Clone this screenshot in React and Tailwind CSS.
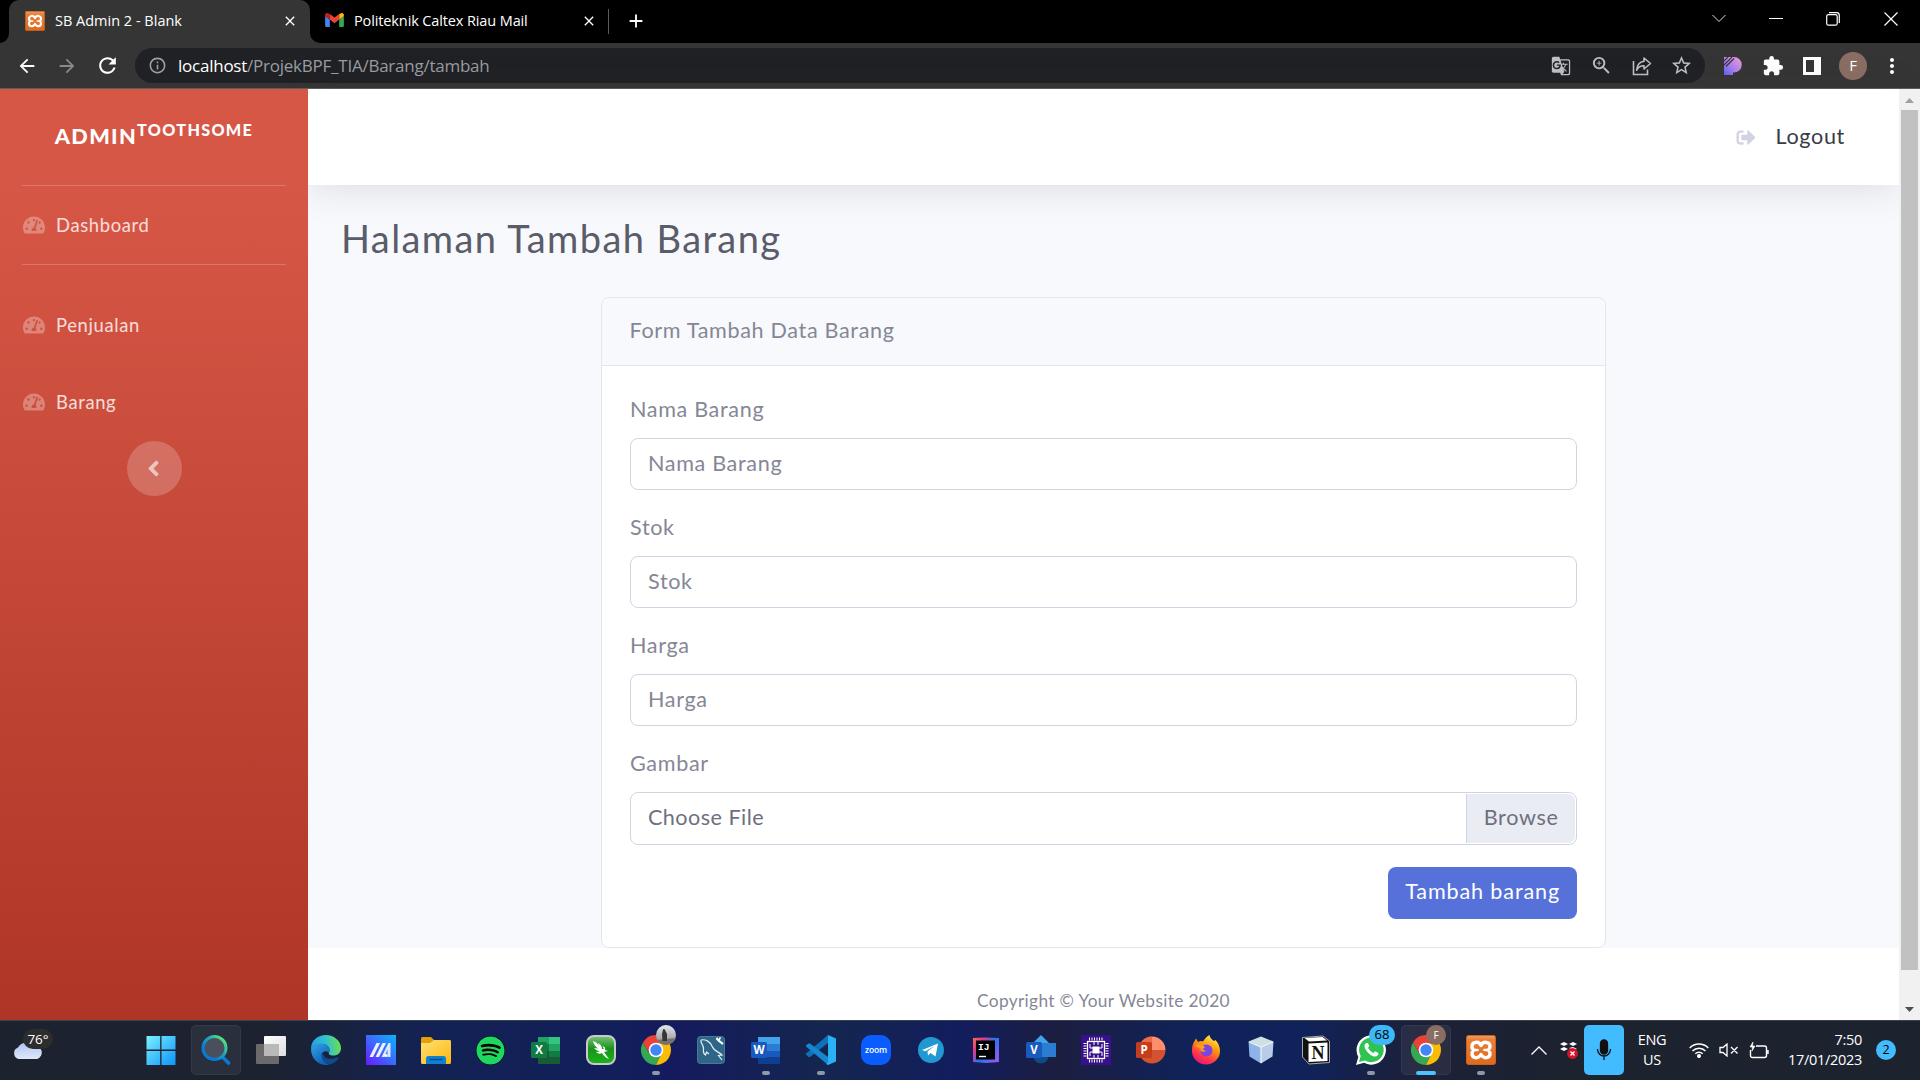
import React from "react";
import { FaTachometerAlt, FaSignOutAlt, FaAngleLeft, FaSpotify } from "react-icons/fa";
import { MdStarBorder, MdExtension, MdGTranslate, MdZoomIn, MdInfoOutline, MdArrowBack, MdArrowForward, MdRefresh, MdMoreVert, MdClose, MdAdd } from "react-icons/md";

const XamppIcon = ({ className }) => (
  <svg viewBox="0 0 30 30" className={className}>
    <defs>
      <linearGradient id="xampp" x1="0" y1="0" x2="0" y2="1">
        <stop offset="0" stopColor="#f0a266" />
        <stop offset="0.14" stopColor="#e9803a" />
        <stop offset="1" stopColor="#e0691c" />
      </linearGradient>
    </defs>
    <rect x="0.5" y="0.5" width="29" height="29" rx="2" fill="url(#xampp)" stroke="#c9601d" />
    <path d="M15 10.500C13.500 7.500 11.500 7 9.500 7.500C5.500 8 5 12.500 7.500 15C5 18 5.500 22 9.500 22.700C12 23 13.500 22 15 19.500C16.500 22 18 23 20.500 22.700C24.500 22 25 18 22.500 15C25 12.500 24.500 8 20.500 7.500C18.500 7 16.500 7.500 15 10.500Z" fill="none" stroke="#fff" strokeWidth="3.400" strokeLinejoin="round" />
    <path d="M8 15H11.500M18.500 15H22" stroke="#fff" strokeWidth="2.600" strokeLinecap="round" />
  </svg>
);

const GmailIcon = () => (
  <svg viewBox="0 0 20 16" className="h-[15px] w-[19px]">
    <path d="M1.5 15H5V7L0 3.4V13.5A1.5 1.5 0 0 0 1.5 15Z" fill="#4285f4" />
    <path d="M15 15H18.5A1.5 1.5 0 0 0 20 13.5V3.4L15 7Z" fill="#34a853" />
    <path d="M15 1V7L20 3.4V2A2 2 0 0 0 16.8 0.4Z" fill="#fbbc04" />
    <path d="M5 7V1L10 4.8L15 1V7L10 10.8Z" fill="#ea4335" />
    <path d="M0 2V3.4L5 7V1L3.2 0.4A2 2 0 0 0 0 2Z" fill="#c5221f" />
  </svg>
);

const ShareIcon = () => (
  <svg viewBox="0 0 20 20" className="h-5 w-5" fill="none" stroke="#bdc1c6" strokeWidth="1.6">
    <path d="M1.5 5V18.5H15.5V13.5" />
    <path d="M12 2L18.5 7.5L12 13V9.8C8.5 9.8 6 11.2 4.7 14.2C5 9.5 7.5 6 12 5.3Z" strokeLinejoin="round" />
  </svg>
);

const PicIcon = () => (
  <svg viewBox="0 0 18 18" className="h-[18px] w-[18px]">
    <defs>
      <linearGradient id="pic" x1="1" y1="0" x2="0" y2="1">
        <stop offset="0" stopColor="#f09fd0" />
        <stop offset="0.5" stopColor="#b583ea" />
        <stop offset="1" stopColor="#5b62f4" />
      </linearGradient>
    </defs>
    <path d="M0 0H10A7 7 0 0 1 10 15.500H9V18H0Z" fill="url(#pic)" />
    <path d="M0 4L4 0M0 8L8 0M2 9.500L10 1.500" stroke="#353535" strokeWidth="1.100" />
  </svg>
);

function TabStrip() {
  return (
    <div className="flex h-[43px] shrink-0 bg-black text-white">
      <svg viewBox="0 0 10 10" className="h-[10px] w-[9px] self-end" preserveAspectRatio="none">
        <path d="M10 0V10H0A10 10 0 0 0 10 0Z" fill="#353535" />
      </svg>
      <div className="flex w-[301px] items-center rounded-t-[10px] bg-[#353535] pb-[2px] pl-[16px] pr-[12px]">
        <XamppIcon className="h-5 w-5" />
        <span className="ml-[10px] flex-1 whitespace-nowrap text-[14.5px]">SB Admin 2 - Blank</span>
        <MdClose className="h-[16px] w-[16px]" />
      </div>
      <svg viewBox="0 0 10 10" className="h-[10px] w-[10px] self-end">
        <path d="M0 0V10H10A10 10 0 0 1 0 0Z" fill="#353535" />
      </svg>
      <div className="flex w-[288px] items-center pb-[2px] pl-[5px] pr-[11px]">
        <GmailIcon />
        <span className="ml-[10px] flex-1 whitespace-nowrap text-[14.500px] tracking-[-0.12px]">Politeknik Caltex Riau Mail</span>
        <MdClose className="h-[16px] w-[16px]" />
      </div>
      <div className="mt-[9px] h-[25px] w-px bg-[#5a5a5a]" />
      <MdAdd className="ml-[16px] mt-[10px] h-[22px] w-[22px]" />
      <div className="ml-auto flex pr-[22px] pt-[12px]">
        <svg viewBox="0 0 14 14" className="mr-[43px] h-[14px] w-[14px]" fill="none" stroke="#ddd">
          <path d="M0.500 3L7 9.500L13.500 3" />
        </svg>
        <svg viewBox="0 0 14 14" className="mr-[43px] h-[14px] w-[14px]" fill="none" stroke="#fff">
          <path d="M0 6.500H14" />
        </svg>
        <svg viewBox="0 0 14 14" className="mr-[44px] h-[14px] w-[14px]" fill="none" stroke="#fff" strokeWidth="1.200">
          <rect x="0.700" y="2.700" width="10.500" height="10.500" rx="1.800" />
          <path d="M3 0.700H10.500A2.800 2.800 0 0 1 13.300 3.500V11" />
        </svg>
        <svg viewBox="0 0 14 14" className="h-[14px] w-[14px]" stroke="#fff" strokeWidth="1.200">
          <path d="M0.500 0.500L13.500 13.500M13.500 0.500L0.500 13.500" />
        </svg>
      </div>
    </div>
  );
}

function Toolbar() {
  return (
    <div className="flex h-[46px] shrink-0 items-center border-b border-[#5e5e5e] bg-[#353535] text-white">
      <MdArrowBack className="ml-[16px] h-[22px] w-[22px]" />
      <MdArrowForward className="ml-[18px] h-[22px] w-[22px] text-[#8a8a8a]" />
      <MdRefresh className="ml-[17px] h-[25px] w-[25px]" />
      <div className="ml-[15px] flex h-[35px] w-[1570px] items-center rounded-full bg-[#202124] pl-[13px] pr-[12px]">
        <MdInfoOutline className="h-[19px] w-[19px] text-[#9aa0a6]" />
        <div className="ml-[11px] whitespace-nowrap text-[17px] tracking-[-0.24px] text-[#9a9da1]">
          <span className="text-white">localhost</span>/ProjekBPF_TIA/Barang/tambah
        </div>
        <div className="ml-auto flex items-center text-[#bdc1c6]">
          <MdGTranslate className="h-[20px] w-[20px]" />
          <MdZoomIn className="ml-[19px] h-[23px] w-[23px]" />
          <div className="ml-[19px]"><ShareIcon /></div>
          <MdStarBorder className="ml-[18px] h-[23px] w-[23px]" />
        </div>
      </div>
      <div className="ml-[19px]"><PicIcon /></div>
      <MdExtension className="ml-[20px] h-[22px] w-[22px]" />
      <div className="ml-[19px] h-[18px] w-[18px] border-[3px] border-r-[7px] border-white" />
      <div className="ml-[18px] flex h-[28px] w-[28px] items-center justify-center rounded-full bg-[#8b6e63] text-[15px]">F</div>
      <MdMoreVert className="ml-[13px] h-[24px] w-[24px]" />
    </div>
  );
}

const NavItem = ({ label }) => (
  <div className="flex h-[77px] items-center pl-[23px] text-[18.400px] tracking-[0.65px] text-white/80">
    <FaTachometerAlt className="mr-[11px] h-[20px] w-[22px] text-white/30" />
    <span className="relative top-px">{label}</span>
  </div>
);

function Sidebar() {
  return (
    <aside className="relative z-10 flex w-[308px] shrink-0 flex-col bg-linear-to-b from-[#d75746] from-10% to-[#af3526]">
      <div className="flex h-[96px] items-center justify-center pb-[2px] text-[21.700px] font-black tracking-[1.300px] text-white">
        <span>ADMIN<sup className="text-[16.200px]">TOOTHSOME</sup></span>
      </div>
      <div className="mx-[22px] h-px bg-white/20" />
      <NavItem label="Dashboard" />
      <div className="mx-[22px] mb-[21.500px] mt-px h-px bg-white/20" />
      <NavItem label="Penjualan" />
      <NavItem label="Barang" />
      <div className="ml-[127px] flex h-[55px] w-[55px] items-center justify-center rounded-full bg-white/20 pr-[3px] text-white/60">
        <FaAngleLeft className="h-[25px] w-[25px]" />
      </div>
    </aside>
  );
}

const Field = ({ label }) => (
  <div className="mb-[21px]">
    <label className="mb-[12px] block">{label}</label>
    <input placeholder={label} className="block h-[52px] w-full rounded-[8px] border border-[#d1d3e2] bg-white px-[17px] pb-[2px] tracking-[0.65px] placeholder:text-[#858796]" />
  </div>
);

function Main() {
  return (
    <main className="flex min-w-0 flex-1 flex-col bg-[#f8f9fc] text-[21.600px] leading-[33px] tracking-[0.65px] text-[#858796]">
      <header className="mb-[30px] flex h-[96px] shrink-0 items-center justify-end bg-white pr-[54px] shadow-[0_3px_38px_rgba(58,59,69,0.15)]">
        <FaSignOutAlt className="mr-[20px] h-[19px] w-[20px] text-[#d1d3e2]" />
        <span className="relative -top-px text-[#3a3b45]">Logout</span>
      </header>
      <h1 className="mb-[36px] ml-[33px] text-[38px] leading-[46px] tracking-[1.400px] text-[#5a5c69]">Halaman Tambah Barang</h1>
      <section className="ml-[293px] w-[1005px] overflow-hidden rounded-[8px] border border-[#e3e6f0] bg-white">
        <div className="border-b border-[#e3e6f0] bg-[#f8f9fc] px-[27.500px] pb-[18px] pt-[16px]">Form Tambah Data Barang</div>
        <div className="px-[28px] pb-[28px] pt-[26.500px]">
          <Field label="Nama Barang" />
          <Field label="Stok" />
          <Field label="Harga" />
          <label className="mb-[12px] block">Gambar</label>
          <div className="flex h-[53px] items-stretch rounded-[8px] border border-[#d1d3e2] bg-white p-px text-[#6e707e]">
            <span className="flex-1 pl-[16px] pt-[7px] tracking-[0.45px]">Choose File</span>
            <span className="rounded-r-[7px] border-l border-[#d1d3e2] bg-[#eaecf4] px-[16.500px] pt-[7px]">Browse</span>
          </div>
          <div className="flex justify-end pt-[22px]">
            <button className="h-[52px] rounded-[8px] bg-[#5671d9] px-[17px] pb-[2px] tracking-[0.85px] text-white">Tambah barang</button>
          </div>
        </div>
      </section>
      <footer className="flex-1 bg-white pt-[36px] text-center text-[17.300px] tracking-[0.35px]">Copyright © Your Website 2020</footer>
    </main>
  );
}

function Scrollbar() {
  return (
    <div className="flex w-[21px] shrink-0 flex-col items-center bg-[#f1f1f1]">
      <svg viewBox="0 0 9 5" className="mt-[9px] h-[5px] w-[9px]"><path d="M0 5L4.500 0L9 5Z" fill="#a0a0a0" /></svg>
      <div className="mt-[7px] h-[860px] w-[17px] bg-[#c1c1c1]" />
      <svg viewBox="0 0 9 5" className="mt-[37px] h-[5px] w-[9px]"><path d="M0 0L4.500 5L9 0Z" fill="#505050" /></svg>
    </div>
  );
}

const svg = "h-[30px] w-[30px]";

const OfficeTile = ({ letter, fill }) => (
  <>
    <rect x="0" y="7" width="16" height="16" rx="1.500" fill={fill} />
    <text x="8" y="19" textAnchor="middle" fontSize="11.500" fontWeight="700" fill="#fff">{letter}</text>
  </>
);

const ChromeMark = () => (
  <>
    <path d="M2 7.500A15 15 0 0 0 15 30L21.500 18.800H8.500Z" fill="#34a853" />
    <path d="M15 8.300H28.400A15 15 0 0 0 2 7.500L8.800 19Z" fill="#ea4335" />
    <path d="M15 8.300H28.400A15 15 0 0 1 15 30L21 18Z" fill="#fbbc04" />
    <circle cx="15" cy="15" r="7.300" fill="#fff" />
    <circle cx="15" cy="15" r="5.700" fill="#4285f4" />
  </>
);

const apps = [
  { name: "start", icon: (
    <svg viewBox="0 0 30 30" className={svg}>
      <defs><linearGradient id="win" x1="0" y1="0" x2="1" y2="1"><stop offset="0" stopColor="#7df0ff" /><stop offset="1" stopColor="#0a94f8" /></linearGradient></defs>
      <path d="M0.500 1H14.200V14.500H0.500ZM15.500 1H29.500V14.500H15.500ZM0.500 16H14.200V30H0.500ZM15.500 16H29.500V30H15.500Z" fill="url(#win)" />
    </svg>) },
  { name: "search", active: true, icon: (
    <svg viewBox="0 0 30 30" className={svg} fill="none">
      <defs><linearGradient id="sea" x1="0.900" y1="0.100" x2="0.300" y2="0.700"><stop offset="0" stopColor="#5ee07a" /><stop offset="0.500" stopColor="#22a8b8" /><stop offset="1" stopColor="#0a7ad8" /></linearGradient></defs>
      <path d="M21 21.500L27.500 28" stroke="#0a7ad8" strokeWidth="3.600" strokeLinecap="round" />
      <circle cx="13.500" cy="13" r="11.500" stroke="url(#sea)" strokeWidth="3" fill="#4a505b" />
    </svg>) },
  { name: "task view", icon: (
    <svg viewBox="0 0 30 30" className={svg}>
      <defs><linearGradient id="tv" x1="0" y1="0" x2="1" y2="1"><stop offset="0" stopColor="#fff" /><stop offset="1" stopColor="#ddd" /></linearGradient></defs>
      <rect x="0" y="9" width="23" height="20" rx="1" fill="#6a6a6a" />
      <rect x="8" y="1" width="22" height="20" rx="1" fill="url(#tv)" />
      <rect x="8" y="9" width="15" height="12" fill="#b9b9b9" />
    </svg>) },
  { name: "edge", icon: (
    <svg viewBox="0 0 30 30" className={svg}>
      <defs>
        <linearGradient id="ed" x1="0" y1="0.500" x2="1" y2="0.400"><stop offset="0" stopColor="#27a0dc" /><stop offset="0.500" stopColor="#2fc0d0" /><stop offset="1" stopColor="#6de04c" /></linearGradient>
        <linearGradient id="ed2" x1="0" y1="0" x2="0.600" y2="1"><stop offset="0" stopColor="#36a5e8" /><stop offset="1" stopColor="#0b5fb4" /></linearGradient>
      </defs>
      <path d="M0 14C0 5 7 0 15 0C23 0 30 6 30 13C30 18 26.500 20.500 22.500 20.500C18.500 20.500 17 19 18 17.500C20 14 17 9 11 9C6 9 1.500 11 0 14Z" fill="url(#ed)" />
      <path d="M0 14C1.500 11 6 8 11 8.500C16 9 19.500 13 18 17C17.500 18.500 16 15 12.500 17C10 19 11 26 18 29.700C8 31.500 0 24 0 14Z" fill="url(#ed2)" />
      <path d="M10.500 18.500C9.500 23 13 28.500 19 29.500C23 28.500 26 26 27.500 23C27.500 22 27 22 26 22.500C19 25.500 12 23.500 11.800 17Z" fill="#114a8f" />
    </svg>) },
  { name: "armoury", icon: (
    <svg viewBox="0 0 30 30" className={svg}>
      <defs><linearGradient id="my" x1="0" y1="1" x2="1" y2="0"><stop offset="0" stopColor="#6a18ff" /><stop offset="0.500" stopColor="#3c6aff" /><stop offset="1" stopColor="#0ab4f8" /></linearGradient></defs>
      <rect width="30" height="30" fill="url(#my)" />
      <path d="M3.500 22H7L14 8H10.500ZM9.500 22H13L20 8H16.500Z" fill="#fff" opacity="0.900" />
      <path d="M15.500 22L22.500 8H24.500V22H21.500V14.500L18.500 22Z" fill="#dfe6ff" />
      <circle cx="20" cy="20.500" r="1.600" fill="#fff" />
    </svg>) },
  { name: "explorer", icon: (
    <svg viewBox="0 0 30 30" className={svg}>
      <defs><linearGradient id="fo" x1="0" y1="0" x2="1" y2="1"><stop offset="0" stopColor="#ffe072" /><stop offset="1" stopColor="#fbb810" /></linearGradient></defs>
      <path d="M0 3.500Q0 2 1.500 2H10L13 5H20V12H0Z" fill="#e3a008" />
      <path d="M0 8H9L13 5H29Q30 5 30 6.500V27.500Q30 29 28.500 29H1.500Q0 29 0 27.500Z" fill="url(#fo)" />
      <path d="M5 29V23.500Q5 21 7.500 21H22.500Q25 21 25 23.500V29Z" fill="#1080d0" />
      <path d="M8.500 24.500H21.500" stroke="#0a4a86" strokeWidth="1.400" />
    </svg>) },
  { name: "spotify", icon: (
    <div className="rounded-full bg-black"><FaSpotify className="h-[29px] w-[29px] text-[#1ed760]" /></div>) },
  { name: "excel", icon: (
    <svg viewBox="0 0 30 30" className={svg}>
      <path d="M7 2H18V9H7Z" fill="#21a366" /><path d="M18 2H29V9H18Z" fill="#33c481" />
      <path d="M7 9H18V16H7Z" fill="#107c41" /><path d="M18 9H29V16H18Z" fill="#21a366" />
      <path d="M7 16H18V29H7Z" fill="#185c37" /><path d="M18 16H29V22H18Z" fill="#107c41" /><path d="M18 22H29V29H18Z" fill="#185c37" />
      <OfficeTile letter="X" fill="#107c41" />
    </svg>) },
  { name: "camtasia", icon: (
    <svg viewBox="0 0 30 30" className={svg}>
      <defs><linearGradient id="cm" x1="0" y1="0" x2="0" y2="1"><stop offset="0" stopColor="#7cc47c" /><stop offset="0.450" stopColor="#1b931b" /><stop offset="1" stopColor="#18b418" /></linearGradient></defs>
      <rect x="1" y="1" width="28" height="28" rx="7" fill="url(#cm)" stroke="#c9c9c9" strokeWidth="2" />
      <path d="M7 6Q11 7 13 11L12 8Q16 10 16 14L18 14L16.500 11Q20 12 19 15L22 16L18 17Q20 20 23 24Q18 22 16 18Q13 20 10 17L14 16.500Q10 16 8 13L12 13.500Q8 11 7 6Z" fill="#fff" />
    </svg>) },
  { name: "chrome", dot: true, badge: (
    <span className="absolute left-[28px] top-[4px] h-[20px] w-[20px] overflow-hidden rounded-full bg-linear-to-b from-[#e6e8ea] via-[#b4bbbf] to-[#8d8d8b]">
      <svg viewBox="0 0 20 20" className="h-full w-full">
        <path d="M0 15L20 13V20H0Z" fill="#77726e" />
        <path d="M7 4.500A1.300 1.300 0 0 1 9 5L11 9V16H6.500L6 9Z" fill="#393536" />
      </svg>
    </span>
  ), icon: (<svg viewBox="0 0 30 30" className={svg}><ChromeMark /></svg>) },
  { name: "workbench", icon: (
    <svg viewBox="0 0 30 30" className={svg} fill="none">
      <rect x="1.500" y="1.500" width="27" height="27" rx="3" fill="#2f6587" stroke="#457c9b" />
      <path d="M5 5C9 4 14 6 16.500 12C18 16 23 17 26 20L22.500 20.500L26 25M5 5C4 8 8 10 7.500 14C7 17 8 19 9.500 20L10.500 17L13 19" stroke="#e2eef3" strokeWidth="1.200" />
      <path d="M20.500 3L22.500 5.500L27 9" stroke="#fff" strokeWidth="2.200" />
      <path d="M22.500 5.500L24.500 2.500" stroke="#fff" strokeWidth="1.500" />
    </svg>) },
  { name: "word", dot: true, icon: (
    <svg viewBox="0 0 30 30" className={svg}>
      <path d="M7 2H29V9H7Z" fill="#41a5ee" /><path d="M7 9H29V16H7Z" fill="#2b7cd3" /><path d="M7 16H29V22H7Z" fill="#185abd" /><path d="M7 22H29V29H7Z" fill="#103f91" />
      <OfficeTile letter="W" fill="#185abd" />
    </svg>) },
  { name: "vscode", dot: true, icon: (
    <svg viewBox="0 0 30 30" className={svg}>
      <path d="M22 0L22 8L4 22L2.500 22L0 19.500V18.500Z" fill="#0f6fb8" />
      <path d="M22 30V22L4 8.500L2.500 8.500L0 10.500V11.500Z" fill="#1587d1" />
      <path d="M22 0L30 3.500V26.500L22 30L20.500 29L22 27Z" fill="#2bb0f5" />
    </svg>) },
  { name: "zoom", icon: (
    <svg viewBox="0 0 30 30" className={svg}>
      <rect width="30" height="30" rx="10" fill="#0b5cff" />
      <text x="15" y="17.500" textAnchor="middle" fontSize="8.500" fontWeight="600" fill="#fff" textLength="22">zoom</text>
    </svg>) },
  { name: "telegram", icon: (
    <svg viewBox="0 0 30 30" className={svg}>
      <circle cx="15" cy="15" r="13" fill="#2298d2" />
      <path d="M6 15L22 8.500L19.500 21.500L14.500 18L12 20.500L11.500 16.500L18.500 11L9.500 16.200Z" fill="#fff" />
    </svg>) },
  { name: "intellij", icon: (
    <svg viewBox="0 0 30 30" className={svg}>
      <defs><linearGradient id="ij" x1="0" y1="0" x2="1" y2="0.700"><stop offset="0" stopColor="#fe6d4a" /><stop offset="0.300" stopColor="#d93a8c" /><stop offset="0.600" stopColor="#2474f0" /><stop offset="1" stopColor="#8a5bf0" /></linearGradient></defs>
      <path d="M2 3L14 2.500L28 3V27L15 28L2 27Z" fill="url(#ij)" />
      <rect x="5" y="5.500" width="19" height="19" fill="#000" />
      <text x="7" y="15" fontSize="9.500" fontWeight="700" fill="#fff" fontFamily="Liberation Mono, monospace">IJ</text>
      <path d="M8 21.500H15" stroke="#fff" strokeWidth="1.400" />
    </svg>) },
  { name: "visio", icon: (
    <svg viewBox="0 0 30 30" className={svg}>
      <circle cx="15" cy="21" r="7.500" fill="#114a8b" />
      <path d="M15 0L23 8L15 16L7 8Z" fill="#41a5ee" />
      <rect x="16" y="8" width="14" height="14" fill="#2b7cd3" />
      <OfficeTile letter="V" fill="#185abd" />
    </svg>) },
  { name: "chip", icon: (
    <svg viewBox="0 0 30 30" className={svg} fill="none" stroke="#fff">
      <rect width="30" height="30" fill="#37118a" stroke="none" />
      <rect x="6.500" y="6.500" width="17" height="17" strokeWidth="1.300" />
      <rect x="12" y="12" width="6" height="6" fill="#fff" />
      <path d="M9 9V13H12M21 9V13H18M9 21V17H12M21 21V17H18M13 7V10M17 7V10M13 23V20M17 23V20" strokeWidth="1" />
      <path d="M8 4H23M8 26H23" strokeWidth="3" strokeDasharray="1 1.500" />
      <path d="M4 8V23M26 8V23" strokeWidth="3" strokeDasharray="1 1.500" />
    </svg>) },
  { name: "powerpoint", icon: (
    <svg viewBox="0 0 30 30" className={svg}>
      <path d="M16 15V1.500A13.500 13.500 0 1 0 29.500 15Z" fill="#d35230" />
      <path d="M16 1.500A13.500 13.500 0 0 0 2.500 15H16Z" fill="#ed6c47" />
      <path d="M16 1.500A13.500 13.500 0 0 1 29.500 15H16Z" fill="#ff8f6b" />
      <OfficeTile letter="P" fill="#c43e1c" />
    </svg>) },
  { name: "firefox", icon: (
    <svg viewBox="0 0 30 30" className={svg}>
      <defs><linearGradient id="ff" x1="0.800" y1="0" x2="0.300" y2="1"><stop offset="0" stopColor="#fff44f" /><stop offset="0.400" stopColor="#ff980e" /><stop offset="0.750" stopColor="#ff3647" /><stop offset="1" stopColor="#e31587" /></linearGradient></defs>
      <path d="M3 7L5 3.500L7 7Q10 5.500 12 6.500Q15 1.500 18.500 0Q19 3.500 23 6L24.500 5Q29 10 29 16A14 13.500 0 0 1 1 16Q1 10 3 7Z" fill="url(#ff)" />
      <circle cx="15.500" cy="15.500" r="6" fill="#7a45e0" />
      <path d="M4 11Q9 8 14 12Q12 15 8.500 14.500Q11 18 15 16" fill="#ffa21a" />
    </svg>) },
  { name: "virtual box", icon: (
    <svg viewBox="0 0 30 30" className={svg}>
      <path d="M15 1.500L27.500 6.500L15 12L2.500 6.500Z" fill="#cfe0e0" />
      <path d="M2.500 6.500L15 12V28.500L3.500 21.500Z" fill="#8db3e8" />
      <path d="M27.500 6.500L15 12V28.500L26.500 21.500Z" fill="#b9cbe6" />
      <path d="M15 12V28M3 7L15 12L27 7" stroke="#eef6fc" strokeWidth="1.200" fill="none" />
    </svg>) },
  { name: "notion", icon: (
    <svg viewBox="0 0 30 30" className={svg}>
      <path d="M1.500 2.500L22 1L28.500 6V27.500L8 29L1.500 22Z" fill="#111" stroke="#aaa" />
      <path d="M3.500 3L21.500 2L26 5.500L8 6.500Z" fill="#fff" />
      <path d="M7.500 8.500L26.500 7.500V26L7.500 27Z" fill="#fff" />
      <text x="17" y="24" textAnchor="middle" fontSize="18" fontWeight="700" fill="#111" fontFamily="Liberation Serif, serif">N</text>
    </svg>) },
  { name: "whatsapp", dot: true, badge: (
    <span className="absolute left-[26px] top-[4px] flex h-[20px] w-[26px] items-center justify-center rounded-full bg-[#3db9f9] text-[13px] text-black">68</span>
  ), icon: (
    <svg viewBox="0 0 30 30" className={svg}>
      <path d="M0 30L2.300 22A14.700 14.700 0 1 1 8 27.800Z" fill="#fff" />
      <path d="M3 27L4.700 21A12.300 12.300 0 1 1 9 25.400Z" fill="#2fc351" />
      <path d="M10.500 8C8 9 8 12 10 15C12.500 19 16 21.500 19 21.500C21.500 21.500 22.800 19.500 22.500 18L19 16.300L17.500 18C15 17 13 15 12 12.800L13.300 11.300L12 8Z" fill="#fff" />
    </svg>) },
  { name: "chrome profile", active: true, current: true, badge: (
    <span className="absolute left-[28px] top-[4px] flex h-[20px] w-[20px] items-center justify-center rounded-full bg-[#8b6e63] text-[10px] text-white">F</span>
  ), icon: (<svg viewBox="0 0 30 30" className={svg}><ChromeMark /></svg>) },
  { name: "xampp", dot: true, icon: (<XamppIcon className={svg} />) },
];

function Taskbar() {
  return (
    <div className="flex h-[60px] shrink-0 items-center border-t border-[#3a4250] bg-[linear-gradient(90deg,#1c222e_0%,#1c2230_14%,#132253_22%,#121f5b_32%,#151a5e_35%,#14264f_43%,#121d5e_50%,#1c1e40_55%,#10225a_62%,#10225a_68%,#1d2038_74%,#1c222e_82%,#1c222e_100%)] pb-px text-white">
      <div className="relative h-full w-[133px]">
        <svg viewBox="0 0 30 18" className="absolute left-[13px] top-[20px] h-[18px] w-[30px]">
          <defs><linearGradient id="cl" x1="0" y1="0" x2="0" y2="1"><stop offset="0" stopColor="#b0c4f0" /><stop offset="1" stopColor="#dfe8f8" /></linearGradient></defs>
          <path d="M6 18A6 6 0 0 1 5 6.500A9 9 0 0 1 20 5A6.600 6.600 0 0 1 24 18Z" fill="url(#cl)" />
        </svg>
        <span className="absolute left-[23px] top-[8px] flex h-[20px] w-[30px] items-center justify-center rounded-full bg-[#2d2d2d] text-[13.500px]">76°</span>
      </div>
      {apps.map((a) => (
        <div key={a.name} className="relative flex h-[58px] w-[55px] items-center justify-center">
          <div className={a.active ? "flex h-[50px] w-[50px] items-center justify-center rounded-[5px] border border-white/5 bg-white/6" : "flex h-[50px] w-[50px] items-center justify-center"}>
            {a.icon}
          </div>
          {a.badge}
          {a.dot && <span className="absolute bottom-[4px] left-[23.500px] h-[4px] w-[8px] rounded-full bg-[#9297a8]" />}
          {a.current && <span className="absolute bottom-[4px] left-[17.500px] h-[4px] w-[20px] rounded-full bg-[#4cc2ff]" />}
        </div>
      ))}
      <svg viewBox="0 0 16 9" className="ml-[23px] h-[9px] w-[16px]" fill="none" stroke="#fff" strokeWidth="1.300"><path d="M0.500 8.500L8 1L15.500 8.500" /></svg>
      <svg viewBox="0 0 18 18" className="ml-[13px] h-[18px] w-[18px]">
        <path d="M0 3L4 1L8 3L4 5ZM9 3L13 1L17 3L13 5ZM0 8L4 6L8 8L4 10ZM9 7L13 6L17 8L13 9Z" fill="#fff" />
        <circle cx="12.500" cy="12.500" r="5.400" fill="#d8122a" />
        <path d="M10.500 10.500L14.500 14.500M14.500 10.500L10.500 14.500" stroke="#fff" strokeWidth="1.300" />
      </svg>
      <div className="ml-[6px] flex h-[50px] w-[40px] items-center justify-center rounded-[5px] bg-[#42bbff]">
        <svg viewBox="0 0 16 22" className="h-[22px] w-[16px]" fill="none" stroke="#111" strokeWidth="1.300">
          <rect x="4.500" y="1" width="7" height="14" rx="3.500" fill="#111" />
          <path d="M1.500 10A6.500 7 0 0 0 14.500 10M8 17V21" />
        </svg>
      </div>
      <div className="ml-[12px] w-[32px] whitespace-nowrap text-center text-[14.500px] leading-[20px] tracking-[-0.3px]">ENG<br />US</div>
      <svg viewBox="0 0 20 16" className="ml-[21px] h-[16px] w-[20px]" fill="none" stroke="#fff" strokeWidth="1.500">
        <path d="M0.700 6A13 13 0 0 1 19.300 6M3.500 9A9 9 0 0 1 16.500 9M6.300 11.700A5.300 5.300 0 0 1 13.700 11.700" />
        <circle cx="10" cy="14" r="1.300" fill="#fff" />
      </svg>
      <svg viewBox="0 0 20 14" className="ml-[10px] h-[14px] w-[20px]" fill="none" stroke="#fff" strokeWidth="1.300">
        <path d="M1 4.500H4L8 1V13L4 9.500H1ZM12 4L18.500 10.500M18.500 4L12 10.500" />
      </svg>
      <svg viewBox="0 0 20 17" className="ml-[10px] h-[17px] w-[20px]" fill="none" stroke="#fff" strokeWidth="1.400">
        <path d="M7 4H15.500Q17.500 4 17.500 6V13.500Q17.500 15.500 15.500 15.500H3.500Q1.500 15.500 1.500 13.500V8M19 8V12" />
        <path d="M4 0L1 5H3.500L3 9L6 4H3.500Z" fill="#fff" strokeWidth="0.600" />
      </svg>
      <div className="ml-auto whitespace-nowrap text-right text-[14.500px] leading-[20px] tracking-[-0.3px]">7:50<br />17/01/2023</div>
      <div className="ml-[14px] mr-[24px] flex h-[20px] w-[20px] items-center justify-center rounded-full bg-[#42bbff] text-[12.500px] text-black">2</div>
    </div>
  );
}

export default function App() {
  return (
    <div className="flex h-[1080px] w-[1920px] flex-col overflow-hidden font-['Open_Sans',sans-serif]">
      <TabStrip />
      <Toolbar />
      <div className="flex h-[931px] shrink-0 font-['Lato',sans-serif]">
        <Sidebar />
        <Main />
        <Scrollbar />
      </div>
      <Taskbar />
    </div>
  );
}
